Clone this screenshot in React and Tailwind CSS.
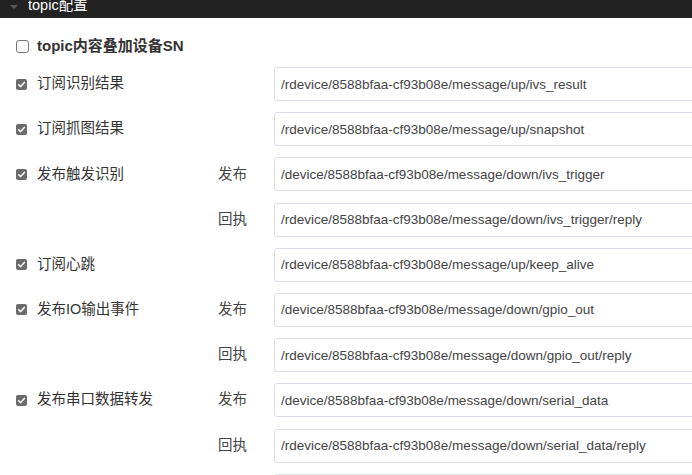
const topics = [
  { label: "订阅识别结果", sub: "", value: "/rdevice/8588bfaa-cf93b08e/message/up/ivs_result" },
  { label: "订阅抓图结果", sub: "", value: "/rdevice/8588bfaa-cf93b08e/message/up/snapshot" },
  { label: "发布触发识别", sub: "发布", value: "/device/8588bfaa-cf93b08e/message/down/ivs_trigger" },
  { label: "", sub: "回执", value: "/rdevice/8588bfaa-cf93b08e/message/down/ivs_trigger/reply" },
  { label: "订阅心跳", sub: "", value: "/rdevice/8588bfaa-cf93b08e/message/up/keep_alive" },
  { label: "发布IO输出事件", sub: "发布", value: "/device/8588bfaa-cf93b08e/message/down/gpio_out" },
  { label: "", sub: "回执", value: "/rdevice/8588bfaa-cf93b08e/message/down/gpio_out/reply" },
  { label: "发布串口数据转发", sub: "发布", value: "/device/8588bfaa-cf93b08e/message/down/serial_data" },
  { label: "", sub: "回执", value: "/rdevice/8588bfaa-cf93b08e/message/down/serial_data/reply" },
];

const Checkbox = ({ checked }) =>
  checked ? (
    <span className="w-[11px] h-[11px] rounded-[2px] bg-[#6b6b6b] flex items-center justify-center shrink-0">
      <svg viewBox="0 0 12 12" className="w-[9px] h-[9px]">
        <path d="M2.2 6.3 L4.9 8.8 L9.8 3.2" fill="none" stroke="#fff" strokeWidth="2" strokeLinecap="round" strokeLinejoin="round" />
      </svg>
    </span>
  ) : (
    <span className="w-[13px] h-[13px] rounded-[3px] border border-[#767676] bg-white shrink-0" />
  );

const App = () => {
  return (
    <div
      className="w-[692px] h-[475px] overflow-hidden bg-white text-[#333]"
      style={{ fontFamily: '"Liberation Sans", "Noto Sans CJK SC", sans-serif' }}
    >
      {/* panel header */}
      <div className="h-[18px] bg-[#222222] flex items-start overflow-hidden">
        <svg viewBox="0 0 8 4" className="w-[8px] h-[4px] ml-[10px] mt-[5px]">
          <path d="M0 0 L8 0 L4 4 Z" fill="#5a5a5a" />
        </svg>
        <span className="ml-[10px] mt-[-3px] text-[14.5px] leading-[16px] text-white">topic配置</span>
      </div>

      <div className="pl-[16px] pt-[17px]">
        <div className="h-[22px] flex items-center gap-[8px]">
          <Checkbox checked={false} />
          <span className="text-[15px] font-bold text-[#333]">topic内容叠加设备SN</span>
        </div>

        <div className="mt-[10px] grid grid-cols-[202px_56px_430px] gap-y-[11.2px]">
          {topics.map((t, i) => (
            <div key={i} className="contents">
              <div className="h-[34px] flex items-center gap-[10px]">
                {t.label && (
                  <>
                    <Checkbox checked />
                    <span className="text-[14.5px]">{t.label}</span>
                  </>
                )}
              </div>
              <div className="h-[34px] flex items-center text-[14.5px] text-[#444]">{t.sub}</div>
              <input
                readOnly
                value={t.value}
                className="h-[34px] w-[430px] px-[6px] border border-[#dcdde6] rounded-[3px] text-[13.5px] text-[#444] outline-none"
              />
            </div>
          ))}
          <div className="h-[34px]" />
          <div className="h-[34px]" />
          <div className="h-[34px] w-[430px] border border-[#dcdde6] rounded-[3px]" />
        </div>
      </div>
    </div>
  );
};

export default App;
